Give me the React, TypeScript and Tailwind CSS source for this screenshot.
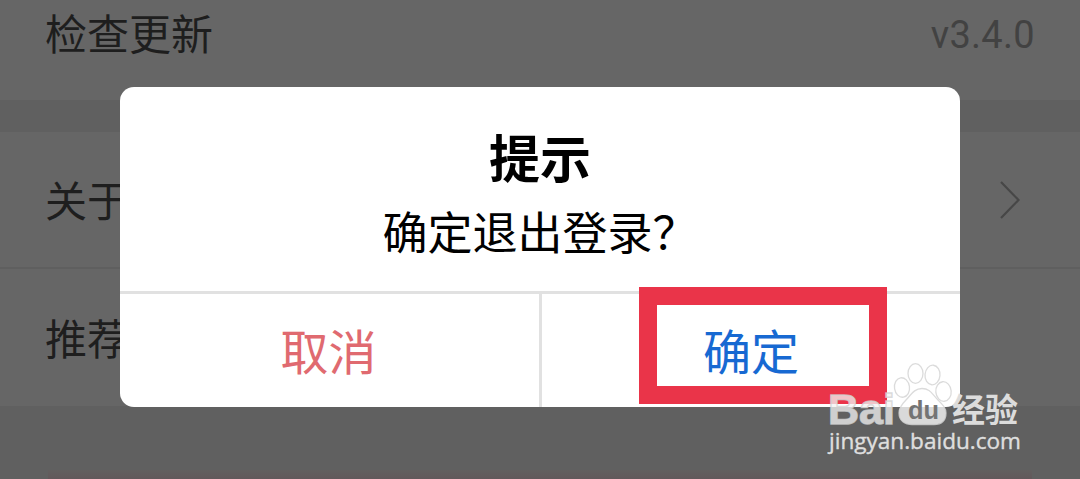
const rows = [
    { id: 1, label: '关于', height: 'h-[137px]' },
    { id: 2, label: '推荐', height: 'h-[137px]' },
]

const toes = [
    { cx: 902, cy: 387.5, rx: 7.5, ry: 9.8, rotate: -8 },
    { cx: 915.5, cy: 373.5, rx: 7.5, ry: 9.8, rotate: 0 },
    { cx: 932.5, cy: 375, rx: 7.5, ry: 9.8, rotate: 5 },
    { cx: 943.5, cy: 391.5, rx: 7.7, ry: 9.8, rotate: -5 },
]

function Chevron() {
    return (
        <svg className="mt-0.5 h-[38px] w-5" viewBox="0 0 20 38" fill="none" stroke="#474747" strokeWidth="2.2">
            <path d="M1 1 L18.5 19 L1 37" />
        </svg>
    )
}

function Settings() {
    return (
        <div className="flex h-full flex-col bg-[#606060] text-[42px] leading-none text-[#1e1e1e]">
            <div className="h-[100px] shrink-0 bg-[#666666]">
                <div className="flex h-16 items-center justify-between px-[45px]">
                    <span>检查更新</span>
                    <span className="pt-1.5 font-['Roboto'] text-[38px] tracking-[0.3px] text-[#424242]">v3.4.0</span>
                </div>
            </div>
            <ul className="mt-8 shrink-0 bg-[#666666]">
                {rows.map((row, rowIdx) => (
                    <li
                        key={row.id}
                        className={`${row.height} flex items-center justify-between pr-[60px] pb-0.5 pl-[45px] ${rowIdx === 0 ? 'border-b-2 border-[#5f5f5f]' : ''}`}
                    >
                        <span>{row.label}</span>
                        {rowIdx === 0 ? <Chevron /> : null}
                    </li>
                ))}
            </ul>
            <div className="mx-12 mt-auto h-[9px] shrink-0 bg-linear-to-b from-[#625f5f] to-[#62585a]" />
        </div>
    )
}

function Dialog() {
    return (
        <div role="dialog" className="flex h-80 w-[840px] flex-col overflow-hidden rounded-[14px] bg-white text-black">
            <div className="flex h-[204px] shrink-0 flex-col items-center pt-11">
                <h2 className="text-[51px] leading-[51px] font-bold">提示</h2>
                <p className="mt-[26px] text-[45px] leading-[45px]">确定退出登录？</p>
            </div>
            <div className="flex flex-1 border-t-3 border-[#e1e1e1] text-[48px] leading-none">
                <button className="w-[422px] border-r-3 border-[#e1e1e1] pr-0.5 pb-1 text-[#e06a70]">取消</button>
                <button className="flex-1 pb-1 text-[#1769d2]">确定</button>
            </div>
        </div>
    )
}

function Watermark() {
    return (
        <svg className="absolute inset-0 h-full w-full" viewBox="0 0 1080 479">
            <g fill="#f4f4f4" fillOpacity="0.76" stroke="#d2d2d2" strokeOpacity="0.8">
                <text x="828" y="423.5" strokeWidth="1.4" fontFamily="Liberation Sans" fontWeight="700" fontSize="43" textLength="67" lengthAdjust="spacingAndGlyphs">Bai</text>
                {toes.map((toe) => (
                    <ellipse key={toe.cx} cx={toe.cx} cy={toe.cy} rx={toe.rx} ry={toe.ry} fill="#ffffff" strokeWidth="1.3" transform={`rotate(${toe.rotate} ${toe.cx} ${toe.cy})`} />
                ))}
                <path fill="#ffffff" strokeWidth="1.3" d="M922 388.500 C914 388.500 911 395 906 400 C901 405 899 408 899 413 C899 421 905 424.500 912 424.500 L934 424.500 C941 424.500 946 421 946 413 C946 408 943 405 938 400 C932 394 930 388.500 922 388.500 Z" />
            </g>
            <text x="908" y="419" fill="#747474" fontFamily="Liberation Sans" fontWeight="700" fontSize="26" textLength="31" lengthAdjust="spacingAndGlyphs">du</text>
            <text x="952" y="421.500" fill="#dcdcdc" fontFamily="Noto Sans CJK SC" fontWeight="700" fontSize="33">经验</text>
            <text x="829" y="449" fill="#dedede" stroke="#dedede" strokeWidth="0.4" fontFamily="Open Sans" fontSize="22.5" textLength="192" lengthAdjust="spacingAndGlyphs">jingyan.baidu.com</text>
        </svg>
    )
}

export default function App() {
    return (
        <div className="relative h-[479px] w-[1080px] overflow-hidden font-['Noto_Sans_CJK_SC',sans-serif]">
            <Settings />
            <div className="absolute inset-0 flex items-start justify-center pt-[87px]">
                <Dialog />
            </div>
            {/* highlight around the confirm button */}
            <div className="absolute top-[287px] left-[639px] h-[117px] w-[248px] border-18 border-[#ea3449]" />
            <Watermark />
        </div>
    )
}
